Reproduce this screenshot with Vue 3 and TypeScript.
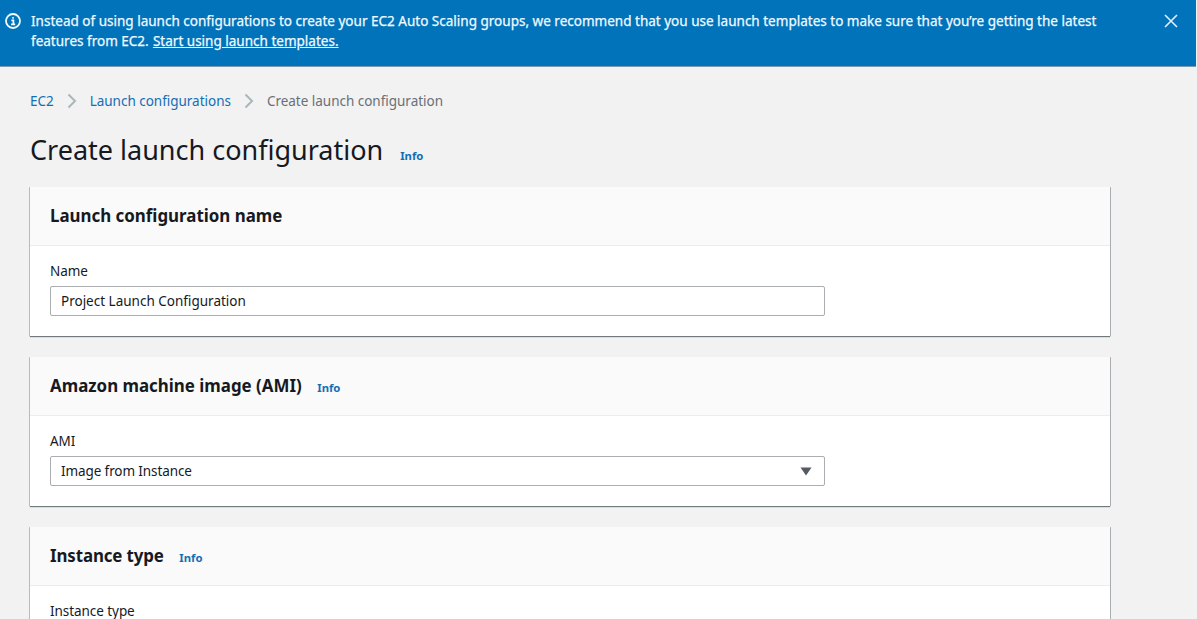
<script setup lang="ts">
interface Panel {
  title: string
  info: boolean
  label: string
  kind: 'input' | 'select'
  value: string
}

const panels: Panel[] = [
  { title: 'Launch configuration name', info: false, label: 'Name', kind: 'input', value: 'Project Launch Configuration' },
  { title: 'Amazon machine image (AMI)', info: true, label: 'AMI', kind: 'select', value: 'Image from Instance' },
  { title: 'Instance type', info: true, label: 'Instance type', kind: 'select', value: '' },
]
</script>

<template>
  <div class="page">
    <div class="banner">
      <svg class="info-icon" viewBox="0 0 16 16"><circle cx="8" cy="8" r="7" /><path d="M6.3 7.3H8.4V11M6 11.3H10.2M7.2 4.8H8.8" /></svg>
      <p class="notice">Instead of using launch configurations to create your EC2 Auto Scaling groups, we recommend that you use launch templates to make sure that you’re getting the latest<br>features from EC2. <a>Start using launch templates.</a></p>
      <svg class="close" viewBox="0 0 14 14"><path d="M1 1L13 13M13 1L1 13" /></svg>
    </div>
    <main>
      <nav class="crumbs">
        <a>EC2</a>
        <svg viewBox="0 0 10 16"><path d="M1.5 1.5L8 8L1.5 14.5" /></svg>
        <a>Launch configurations</a>
        <svg viewBox="0 0 10 16"><path d="M1.5 1.5L8 8L1.5 14.5" /></svg>
        <span>Create launch configuration</span>
      </nav>
      <header class="title"><h1>Create launch configuration</h1><a class="info">Info</a></header>
      <section v-for="p in panels" :key="p.title" class="panel">
        <div class="head"><h2>{{ p.title }}</h2><a v-if="p.info" class="info">Info</a></div>
        <div class="body">
          <label>{{ p.label }}</label>
          <div class="control" :class="p.kind"><span>{{ p.value }}</span>
            <svg v-if="p.kind === 'select'" class="caret" viewBox="0 0 12 9"><path d="M.5.5H11.5L6 8.5Z" /></svg>
          </div>
        </div>
      </section>
    </main>
  </div>
</template>

<style>
body { background: #f2f2f2; }
</style>
<style scoped>
.page { box-sizing: border-box; height: 619px; overflow: hidden; background: #f2f2f2; color: #16191f; font: 13.5px/20px "Noto Sans", "Open Sans", sans-serif; }
.banner { box-sizing: border-box; width: 1196px; height: 67px; display: flex; align-items: flex-start; padding: 11px 18px 0 5px; background: #0073bb; border-bottom: 1px solid #7f98ab; color: #f1faff; }
.info-icon { width: 16px; height: 16px; margin: 2px 10px 0 0; fill: none; stroke: #f1faff; stroke-width: 1.8; flex: none; }
.notice { flex: 1; margin: 0; white-space: pre; font-size: 13.52px; -webkit-text-stroke: .25px #f1faff; }
.notice a { margin-left: .7px; text-decoration: underline; }
.close { width: 14px; height: 14px; margin-top: 3px; fill: none; stroke: #e0f1fb; stroke-width: 1.6; flex: none; }
main { width: 1080px; margin-left: 30px; }
.crumbs { display: flex; align-items: center; height: 20px; padding-top: 24px; letter-spacing: -.02px; color: #687078; }
.crumbs a, .info { color: #146eb4; }
.crumbs svg { width: 10px; height: 16px; margin: 0 13.2px 0 12.8px; fill: none; stroke: #aab7b8; stroke-width: 2; }
.title { display: flex; align-items: baseline; height: 36px; margin-top: 21px; }
h1 { margin: 0; font-size: 27px; line-height: 35px; font-weight: 400; }
.info { font-size: 11.3px; font-weight: 700; margin-left: 17px; }
.panel { height: 149px; margin: 19px 0 21px; background: #fff; box-shadow: 0 1px 1px #70797c, 1px 0 #b5bbbc, -1px 0 #c5cacb; }
.head { box-sizing: border-box; height: 59px; display: flex; align-items: baseline; padding: 18px 20px 16px; background: #fafafa; border-bottom: 1px solid #eaeded; }
.head .info { margin-left: 15.5px; }
h2 { margin: 0; font-size: 16.9px; line-height: 22px; font-weight: 700; }
.panel:last-child h2 { letter-spacing: -.12px; }
.body { padding: 15px 20px; }
label { display: block; height: 18px; padding-top: 2px; margin-bottom: 5px; line-height: 16px; letter-spacing: -.06px; }
.control { box-sizing: border-box; width: 775px; height: 30px; display: flex; align-items: center; justify-content: space-between; padding: 0 12px 0 10px; border: 1px solid #aaaeb0; border-radius: 2px; }
.select { letter-spacing: -.1px; }
.caret { width: 12px; height: 9px; fill: #545b64; }
</style>
